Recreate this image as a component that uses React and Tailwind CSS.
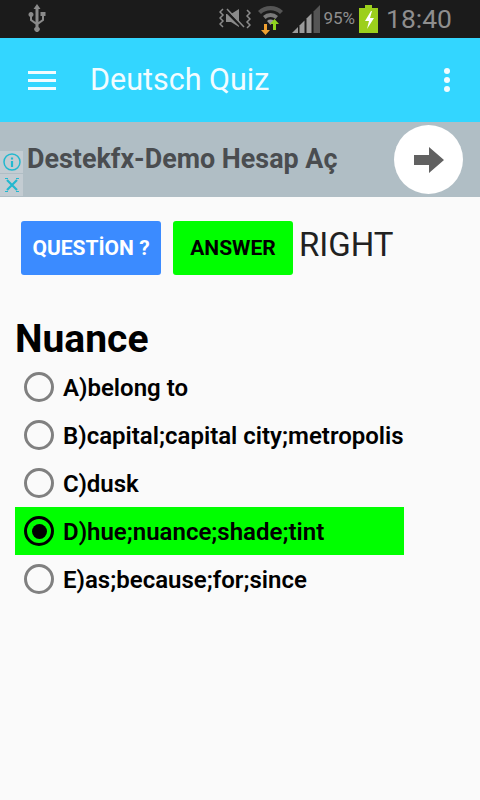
const options = [
  { label: "A)belong to" },
  { label: "B)capital;capital city;metropolis" },
  { label: "C)dusk" },
  { label: "D)hue;nuance;shade;tint", picked: true },
  { label: "E)as;because;for;since" }
];

function StatusBar() {
  return (
    <div className="h-[38px] bg-[#1b1b1b] flex items-center pl-[27px] pr-[28px]">
      {/* usb */}
      <svg width="20" height="28" viewBox="0 0 20 28" fill="#8a8a8a" className="-mt-[3px]">
        <path d="M10 0l3.500 5H11.500v13l3.500-2.500V12h-1.500V8h5v4H17v4.500l-5.500 4V23a2.700 2.700 0 1 1-3 0v-2.500L3 16.500V12.800a2.500 2.500 0 1 1 2 0v2.700l3.500 2.500V5H6.500z" />
      </svg>
      <div className="ml-auto flex items-center">
        {/* mute + vibrate */}
        <svg width="32" height="22" viewBox="0 0 32 22" fill="none" stroke="#8a8a8a" strokeWidth="1.500">
          <path d="M4 1L1 4l3 3-3 3 3 3-3 3 3 3" />
          <path d="M28 2l3 3-3 3 3 3-3 3 3 3-3 3" />
          <path d="M7 6h5l8-5v18l-8-5H7z" fill="#8a8a8a" stroke="none" />
          <path d="M6 2l17 17" stroke="#1b1b1b" strokeWidth="2.500" />
          <path d="M8 1l17 18" strokeWidth="1.500" />
        </svg>
        {/* wifi */}
        <svg className="ml-[6px]" width="27" height="32" viewBox="0 0 27 32">
          <path d="M1 8a18 18 0 0 1 25 0l-3 3a14 14 0 0 0-19 0z" fill="#555" />
          <path d="M6 13a11 11 0 0 1 15 0l-2.500 3a7 7 0 0 0-10 0z" fill="#7a7a7a" />
          <path d="M10 18a5 5 0 0 1 7 0l-3.500 4z" fill="#9a9a9a" />
          <path d="M7 21h3v6h3l-4.500 5L4 27h3z" fill="#f0a030" />
          <path d="M16 27v-6h-3l4.500-5 4.500 5h-3v6z" fill="#8fd420" />
        </svg>
        {/* signal */}
        <svg className="ml-[8px]" width="28" height="28" viewBox="0 0 28 28">
          <path d="M0 28l6-6v6z" fill="#9a9a9a" />
          <path d="M7.500 20.500l5-5V28h-5z" fill="#9a9a9a" />
          <path d="M14.500 13.500l5-5V28h-5z" fill="#9a9a9a" />
          <path d="M21.500 6.500L28 0v28h-6.500z" fill="#555" />
        </svg>
        <span className="ml-[3px] text-[17px] text-[#8e8e8e]">95%</span>
        {/* battery */}
        <svg className="ml-[4px]" width="19" height="28" viewBox="0 0 19 28">
          <path d="M6 0h7v3h6v25H0V3h6z" fill="#9ccf1c" />
          <path d="M12 6l-6 10h4l-2 8 7-11h-4l2-7z" fill="#fff" />
        </svg>
        <span className="ml-[8px] text-[26.500px] text-[#8e8e8e]">18:40</span>
      </div>
    </div>
  );
}

function AppBar() {
  return (
    <div className="h-[84px] bg-[#33d6ff] flex items-center pl-[28px] pr-[30px] text-[#f2fcff]">
      <div className="w-[28px] h-[19px] flex flex-col justify-between">
        <span className="h-[3px] bg-[#f2fcff]" />
        <span className="h-[3px] bg-[#f2fcff]" />
        <span className="h-[3px] bg-[#f2fcff]" />
      </div>
      <h1 className="ml-[34px] text-[30.500px] leading-none">Deutsch Quiz</h1>
      <div className="ml-auto flex flex-col gap-[3px]">
        <span className="size-[6px] rounded-full bg-[#f2fcff]" />
        <span className="size-[6px] rounded-full bg-[#f2fcff]" />
        <span className="size-[6px] rounded-full bg-[#f2fcff]" />
      </div>
    </div>
  );
}

function AdBanner() {
  return (
    <div className="relative h-[75px] bg-[#b0bec5] flex items-center pl-[27px] pr-[17px]">
      <span className="text-[26.900px] font-bold text-[#4a4d50]">Destekfx-Demo Hesap Aç</span>
      <div className="ml-auto size-[69px] rounded-full bg-white flex items-center justify-center">
        <svg width="30" height="26" viewBox="0 0 30 26" fill="#616161">
          <path d="M0 8h15V0l15 13-15 13v-8H0z" />
        </svg>
      </div>
      {/* ad choices */}
      <div className="absolute left-0 top-[29px] w-[23px] h-[46px] flex flex-col gap-[1px]">
        <div className="h-[22px] bg-[#c3ccd2] flex items-center justify-center">
          <svg width="18" height="18" viewBox="0 0 18 18" fill="none" stroke="#22b8cf" strokeWidth="1.500">
            <circle cx="9" cy="9" r="8" />
            <path d="M9 8v6M9 4.500v2" strokeWidth="2.200" />
          </svg>
        </div>
        <div className="h-[22px] bg-[#c3ccd2] flex items-center justify-center">
          <svg width="14" height="14" viewBox="0 0 14 14" fill="none" stroke="#22b8cf" strokeWidth="2.200">
            <path d="M2 2l10 10M12 2L2 12" />
            <path d="M0 0h3M11 0h3M0 14h3M11 14h3" strokeWidth="2" />
          </svg>
        </div>
      </div>
    </div>
  );
}

function Option({ label, picked }) {
  return (
    <div className={`h-[48px] w-[389px] flex items-center pl-[9px] ${picked ? "bg-[#00ff00]" : ""}`}>
      <span className={`size-[30px] rounded-full border-[3px] flex items-center justify-center ${picked ? "border-black" : "border-[#808080]"}`}>
        {picked && <span className="size-[15px] rounded-full bg-black" />}
      </span>
      <span className="ml-[9px] pt-[1px] text-[24px] font-[600] text-black whitespace-nowrap">{label}</span>
    </div>
  );
}

export default function App() {
  return (
    <div className="w-[480px] h-[800px] bg-[#fafafa] overflow-hidden font-['Roboto',sans-serif]">
      <StatusBar />
      <AppBar />
      <AdBanner />

      <div className="flex items-start pt-[24px] pl-[21px]">
        <button className="w-[140px] h-[54px] pt-[2px] rounded-[3px] bg-[#3b8bff] text-white text-[21px] font-bold">QUESTİON ?</button>
        <button className="ml-[12px] w-[120px] h-[54px] pt-[2px] rounded-[3px] bg-[#00ff00] text-black text-[21px] font-bold">ANSWER</button>
        <span className="ml-[6px] text-[33px] leading-[48px] text-[#212121]">RIGHT</span>
      </div>

      <h2 className="mt-[40px] ml-[15px] text-[39px] leading-[48px] font-bold text-black">Nuance</h2>

      <div className="ml-[15px]">
        {options.map((item) => (
          <Option key={item.label} label={item.label} picked={item.picked} />
        ))}
      </div>
    </div>
  );
}
